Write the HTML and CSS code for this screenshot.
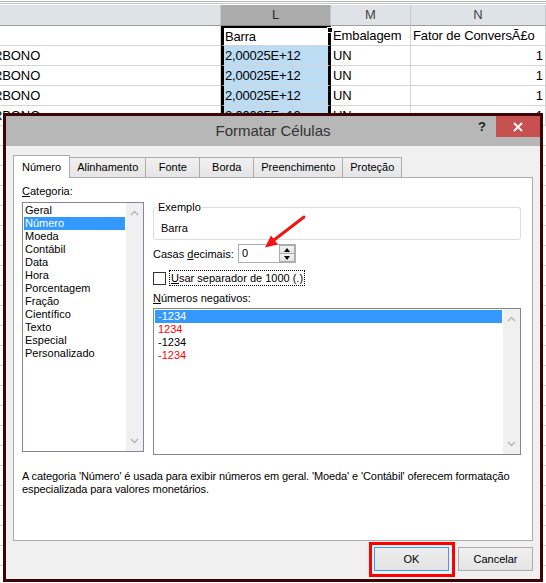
FILE: index.html
```html
<!DOCTYPE html>
<html lang="pt">
<head>
<meta charset="utf-8">
<link rel="stylesheet" href="styles.css">
</head>
<body>
<div class="sheet">
  <div class="topbar"></div>
  <div class="grid">
    <div class="h"></div><div class="h sel">L</div><div class="h">M</div><div class="h">N</div>
    <div class="c"></div><div class="c l active">Barra<span class="handle"></span></div><div class="c">Embalagem</div><div class="c">Fator de ConversÃ£o</div>
    <div class="c k">RBONO</div><div class="c l">2,00025E+12</div><div class="c">UN</div><div class="c num">1</div>
    <div class="c k">RBONO</div><div class="c l">2,00025E+12</div><div class="c">UN</div><div class="c num">1</div>
    <div class="c k">RBONO</div><div class="c l">2,00025E+12</div><div class="c">UN</div><div class="c num">1</div>
    <div class="c k">RBONO</div><div class="c l">2,00025E+12</div><div class="c">UN</div><div class="c num">1</div>
  </div>
  <div class="filler"></div>
</div>

<div class="dialog">
  <div class="titlebar">
    <div class="title">Formatar Células</div>
    <div class="ctrls">
      <span class="help">?</span>
      <span class="close"><svg width="10" height="10" viewBox="0 0 10 10"><path d="M1 1L9 9M9 1L1 9" stroke="#fff" stroke-width="1.8"/></svg></span>
    </div>
  </div>
  <div class="dbody">
    <div class="tabs">
      <div class="tab active">Número</div>
      <div class="tab">Alinhamento</div>
      <div class="tab">Fonte</div>
      <div class="tab">Borda</div>
      <div class="tab">Preenchimento</div>
      <div class="tab">Proteção</div>
    </div>
    <div class="panel">
      <div class="cols">
        <div class="left">
          <div class="lbl"><u>C</u>ategoria:</div>
          <div class="listbox cat">
            <div class="items">
              <div class="it">Geral</div>
              <div class="it on">Número</div>
              <div class="it">Moeda</div>
              <div class="it">Contábil</div>
              <div class="it">Data</div>
              <div class="it">Hora</div>
              <div class="it">Porcentagem</div>
              <div class="it">Fração</div>
              <div class="it">Científico</div>
              <div class="it">Texto</div>
              <div class="it">Especial</div>
              <div class="it">Personalizado</div>
            </div>
            <div class="sb">
              <svg width="9" height="6" viewBox="0 0 9 6"><path d="M1 5L4.5 1.5L8 5" fill="none" stroke="#b4b4b4" stroke-width="1.4"/></svg>
              <svg width="9" height="6" viewBox="0 0 9 6"><path d="M1 1L4.5 4.5L8 1" fill="none" stroke="#b4b4b4" stroke-width="1.4"/></svg>
            </div>
          </div>
        </div>
        <div class="right">
          <fieldset class="group">
            <legend>Exemplo</legend>
            <div class="sample">Barra</div>
          </fieldset>
          <div class="decrow">
            <span class="declbl">Casas <u>d</u>ecimais:</span>
            <div class="spin">
              <span class="val">0</span>
              <span class="btns"><span class="up"></span><span class="down"></span></span>
            </div>
          </div>
          <div class="chkrow">
            <span class="box"></span>
            <span class="chklbl"><u>U</u>sar separador de 1000 (.)</span>
          </div>
          <div class="lbl neglbl"><u>N</u>úmeros negativos:</div>
          <div class="listbox neg">
            <div class="items">
              <div class="it on">-1234</div>
              <div class="it red">1234</div>
              <div class="it">-1234</div>
              <div class="it red">-1234</div>
            </div>
            <div class="sb">
              <svg width="9" height="6" viewBox="0 0 9 6"><path d="M1 5L4.5 1.5L8 5" fill="none" stroke="#b4b4b4" stroke-width="1.4"/></svg>
              <svg width="9" height="6" viewBox="0 0 9 6"><path d="M1 1L4.5 4.5L8 1" fill="none" stroke="#b4b4b4" stroke-width="1.4"/></svg>
            </div>
          </div>
        </div>
      </div>
      <p class="desc">A categoria 'Número' é usada para exibir números em geral. 'Moeda' e 'Contábil' oferecem formatação<br>especializada para valores monetários.</p>
    </div>
    <div class="buttons">
      <button class="btn ok">OK</button>
      <button class="btn">Cancelar</button>
    </div>
  </div>
</div>

<svg class="arrow" width="50" height="40" viewBox="260 212 50 40">
  <path d="M304 217L274 240" stroke="#f01414" stroke-width="3" stroke-linecap="round"/>
  <polygon points="265,247.5 278,244.5 271,235.5" fill="#f01414"/>
</svg>
<div class="okmark"></div>
</body>
</html>
```

FILE: styles.css
```css
* { box-sizing: border-box; }
body {
  margin: 0;
  width: 546px;
  height: 583px;
  overflow: hidden;
  background: #fff;
  position: relative;
  font-family: "Liberation Sans", Arial, sans-serif;
}

/* spreadsheet */
.topbar {
  height: 5px;
  background: linear-gradient(#fff 0 1px, #b4b4b4 1px 2px, #fff 2px 3px, #c6c6c6 3px 4px, #fff 4px 5px);
}
.grid {
  display: grid;
  grid-template-columns: 221px 110px 80px 135px;
  font-size: 13px;
  color: #000;
}
.h {
  height: 21px;
  background: #dfe3e8;
  border-bottom: 1px solid #9e9e9e;
  border-right: 1px solid #c5c8cc;
  text-align: center;
  line-height: 20px;
  color: #444;
}
.h.sel { background: #ababab; border-bottom-color: #8a8a8a; color: #2a2a2a; }
.c {
  height: 20px;
  border-bottom: 1px solid #d4d4d4;
  border-right: 1px solid #d4d4d4;
  line-height: 20px;
  padding: 0 2px;
  white-space: nowrap;
  overflow: hidden;
  letter-spacing: -0.1px;
}
.c.k { text-indent: -7px; padding-left: 0; }
.c.l {
  background: #bcdcf4;
  border-left: 3px solid #000;
  border-right: 3px solid #000;
  padding-left: 1px;
  letter-spacing: -0.2px;
}
.c.l.active { background: #fff; border-top: 2px solid #000; line-height: 18px; overflow: visible; position: relative; }
.handle {
  position: absolute;
  right: -5px;
  top: -1px;
  width: 6px;
  height: 6px;
  background: #000;
  border: 1px solid #fff;
}
.c.num { text-align: right; }
.filler {
  height: 480px;
  background: repeating-linear-gradient(#fff 0 19px, #d4d4d4 19px 20px);
}

/* dialog */
.dialog {
  position: absolute;
  left: 3px;
  top: 113px;
  width: 540px;
  height: 469px;
  border: 3px solid #3e0404;
  background: #f0f0f0;
  display: flex;
  flex-direction: column;
  font-size: 11px;
  color: #000;
}
.titlebar {
  height: 30px;
  flex: none;
  background: #b7b7b7;
  display: grid;
  grid-template-columns: 1fr auto 1fr;
  align-items: start;
}
.title {
  grid-column: 2;
  font-size: 15px;
  line-height: 30px;
  color: #333;
}
.ctrls { grid-column: 3; justify-self: end; display: flex; }
.help {
  width: 28px;
  text-align: center;
  font-weight: bold;
  font-size: 13px;
  line-height: 22px;
  color: #222;
}
.close {
  width: 44px;
  height: 21px;
  background: #c75050;
  display: flex;
  align-items: center;
  justify-content: center;
}
.dbody {
  flex: 1;
  padding: 9px 7px 0;
  display: flex;
  flex-direction: column;
}
.tabs {
  display: flex;
  align-items: flex-end;
  height: 22px;
  position: relative;
  z-index: 1;
}
.tab {
  height: 20px;
  min-width: 55px;
  padding: 0 7px;
  border: 1px solid #acacac;
  border-bottom: none;
  margin-left: -1px;
  background: linear-gradient(#f0f0f0, #e5e5e5);
  line-height: 18px;
  text-align: center;
}
.tab.active {
  height: 23px;
  min-width: 57px;
  margin-left: 0;
  margin-bottom: -1px;
  background: #fff;
  padding: 0 8px;
  line-height: 22px;
}
.panel {
  height: 364px;
  flex: none;
  border: 1px solid #acacac;
  background: #fff;
  padding: 7px 11px 0 8px;
}
.cols { display: flex; gap: 9px; }
.left { width: 122px; }
.right { width: 368px; padding-top: 16px; }
.lbl { line-height: 13px; height: 13px; }
.listbox {
  border: 1px solid #828790;
  display: flex;
  background: #fff;
}
.listbox.cat { height: 250px; margin-top: 4px; }
.listbox.neg { height: 147px; margin-top: 3px; }
.items { flex: 1; padding: 1px; }
.it { height: 13px; line-height: 13px; padding-left: 1px; white-space: nowrap; }
.neg .it { padding-left: 3px; }
.it.on { background: #3399ff; color: #fff; }
.it.red { color: #ff0000; }
.sb {
  width: 17px;
  background: #f0f0f0;
  display: flex;
  flex-direction: column;
  justify-content: space-between;
  align-items: center;
  padding: 7px 0 7px;
}
.group {
  margin: 0;
  padding: 8px 0 4px 7px;
  border: 1px solid #dcdcdc;
  border-radius: 3px;
}
.group legend { padding: 0 1px; margin-left: -4px; line-height: 13px; }
.sample { line-height: 13px; }
.decrow { display: flex; align-items: center; margin-top: 4px; }
.declbl { width: 85px; }
.spin {
  width: 58px;
  height: 19px;
  border: 1px solid #abadb3;
  display: flex;
  background: #fff;
}
.spin .val { flex: 1; padding-left: 3px; line-height: 17px; }
.spin .btns { width: 16px; display: flex; flex-direction: column; }
.spin .btns span {
  flex: 1;
  border: 1px solid #acacac;
  background: linear-gradient(#f3f3f3, #e3e3e3);
  display: flex;
  align-items: center;
  justify-content: center;
}
.spin .btns span + span { border-top: none; }
.spin .up::after {
  content: "";
  border-left: 3.5px solid transparent;
  border-right: 3.5px solid transparent;
  border-bottom: 4px solid #000;
}
.spin .down::after {
  content: "";
  border-left: 3.5px solid transparent;
  border-right: 3.5px solid transparent;
  border-top: 4px solid #000;
}
.chkrow { display: flex; align-items: center; margin-top: 7px; }
.box { width: 13px; height: 13px; border: 1px solid #333; background: #fff; }
.chklbl {
  margin-left: 3px;
  border: 1px dotted #000;
  padding: 0 1px;
  line-height: 14px;
}
.neglbl { margin-top: 6px; }
.desc { margin: 15px 0 0; line-height: 13px; white-space: nowrap; letter-spacing: -0.1px; }
.buttons {
  display: flex;
  justify-content: flex-end;
  gap: 9px;
  margin-top: 6px;
}
.btn {
  width: 75px;
  height: 24px;
  margin: 0;
  font: 11px "Liberation Sans", Arial, sans-serif;
  color: #000;
  border: 1px solid #acacac;
  background: linear-gradient(#f0f0f0, #e5e5e5);
}
.btn.ok { border-color: #3c9bf0; background: linear-gradient(#eeeeee, #e3e3e3); }

/* annotations */
.arrow { position: absolute; left: 260px; top: 212px; }
.okmark {
  position: absolute;
  left: 369px;
  top: 542px;
  width: 86px;
  height: 35px;
  border: 3px solid #ff0000;
}
```
